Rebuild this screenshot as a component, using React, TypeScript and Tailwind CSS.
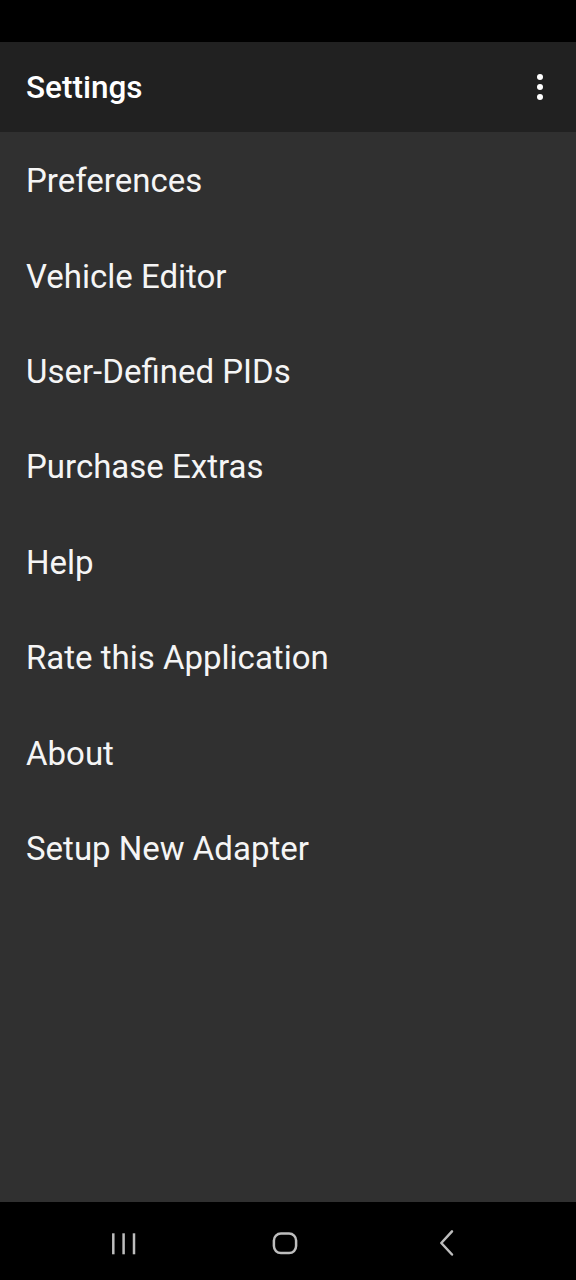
import React from "react";

const items = [
  "Preferences",
  "Vehicle Editor",
  "User-Defined PIDs",
  "Purchase Extras",
  "Help",
  "Rate this Application",
  "About",
  "Setup New Adapter",
];

export default function App() {
  return (
    <div
      className="w-[576px] h-[1280px] flex flex-col bg-[#303030] overflow-hidden"
      style={{ fontFamily: "Roboto, 'Noto Sans', sans-serif" }}
    >
      <div className="h-[42px] bg-black shrink-0" />
      <div className="h-[90px] bg-[#212121] shrink-0 flex items-center justify-between pl-[26px] pr-[16px]">
        <span className="text-white text-[31.5px] font-medium leading-none pt-[2px]">Settings</span>
        <div className="w-[40px] h-[40px] flex flex-col items-center justify-center gap-[3.5px]">
          <span className="block w-[6.5px] h-[6.5px] rounded-full bg-white" />
          <span className="block w-[6.5px] h-[6.5px] rounded-full bg-white" />
          <span className="block w-[6.5px] h-[6.5px] rounded-full bg-white" />
        </div>
      </div>
      <div className="flex-1 flex flex-col">
        {items.map((t) => (
          <div key={t} className="h-[95.43px] shrink-0 flex items-center pl-[26px] pt-[2px]">
            <span className="text-[#f5f5f5] text-[33px] leading-none">{t}</span>
          </div>
        ))}
      </div>
      <div className="h-[78px] bg-black shrink-0 flex items-start pt-[27px]">
        <svg className="ml-[112px] shrink-0" width="24" height="30" viewBox="0 0 24 30" fill="none" stroke="#bdbdbd" strokeWidth="2.5">
          <line x1="1.3" y1="4.3" x2="1.3" y2="25.3" />
          <line x1="11.6" y1="4.3" x2="11.6" y2="25.3" />
          <line x1="22" y1="4.3" x2="22" y2="25.3" />
        </svg>
        <svg className="ml-[135px] shrink-0" width="28" height="30" viewBox="0 0 28 30" fill="none" stroke="#bdbdbd" strokeWidth="2.5">
          <rect x="2.9" y="4.5" width="22.2" height="19.6" rx="7" />
        </svg>
        <svg className="ml-[139px] shrink-0" width="18" height="30" viewBox="0 0 18 30" fill="none" stroke="#bdbdbd" strokeWidth="2.5" strokeLinecap="round" strokeLinejoin="round">
          <polyline points="14,2.3 3.3,14 14,25.5" />
        </svg>
      </div>
    </div>
  );
}
